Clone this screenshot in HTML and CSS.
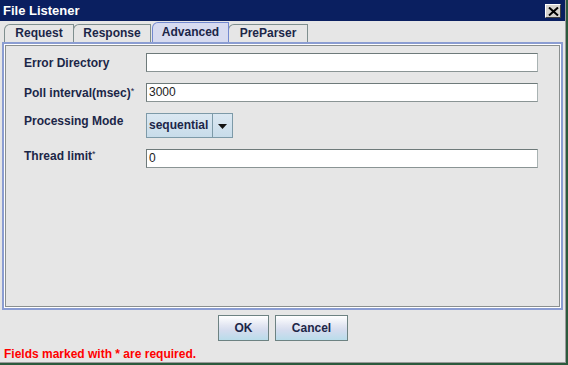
FILE: index.html
```html
<!DOCTYPE html>
<html lang="en">
<head>
  <meta charset="UTF-8">
  <title>File Listener</title>
  <link rel="stylesheet" href="styles.css">
</head>
<body>

  <div class="window">
    <div class="frame">
      <div class="titlebar">
        <span class="title">File Listener</span>
        <button class="close-btn">
          <svg width="11" height="9" viewBox="0 0 11 9"><path d="M1 0.5 L10 8.5 M10 0.5 L1 8.5" stroke="#000" stroke-width="2"/></svg>
        </button>
      </div>

      <div class="tabs">
        <div class="tab tab-request">Request</div>
        <div class="tab tab-response">Response</div>
        <div class="tab tab-advanced active-tab">Advanced</div>
        <div class="tab tab-preparser">PreParser</div>
      </div>

      <div class="panel">
        <div class="row">
          <label>Error Directory</label>
          <div class="text-field"></div>
        </div>
        <div class="row">
          <label>Poll interval(msec)<sup>*</sup></label>
          <div class="text-field">3000</div>
        </div>
        <div class="row row-combo">
          <label>Processing Mode</label>
          <div class="combo">
            <span class="combo-value">sequential</span>
            <span class="combo-arrow">
              <svg width="9" height="5" viewBox="0 0 9 5"><path d="M0 0 H9 L4.5 5 Z" fill="#111"/></svg>
            </span>
          </div>
        </div>
        <div class="row row-last">
          <label>Thread limit<sup>*</sup></label>
          <div class="text-field">0</div>
        </div>
      </div>

      <div class="buttons">
        <button class="btn btn-ok">OK</button>
        <button class="btn btn-cancel">Cancel</button>
      </div>

      <div class="note">Fields marked with * are required.</div>
    </div>
  </div>

</body>
</html>
```

FILE: styles.css
```css
body {
  margin: 0;
  font-family: "Liberation Sans", Arial, sans-serif;
  font-size: 12px;
  background-color: #e6e6e6;
}

.window {
  width: 568px;
  height: 365px;
  box-sizing: border-box;
  border-right: 2px solid #2c5a3d;
  border-bottom: 2px solid #2c5a3d;
  background-color: #e6e6e6;
}

.frame {
  height: 100%;
  box-sizing: border-box;
  border-right: 1px solid #9a9a9a;
  border-bottom: 1px solid #9a9a9a;
  display: flex;
  flex-direction: column;
}

.titlebar {
  height: 21px;
  background-color: #0a1f60;
  display: flex;
  align-items: center;
  justify-content: space-between;
  padding: 0 4px 0 3px;
}

.title {
  color: white;
  font-weight: bold;
  font-size: 13px;
}

.close-btn {
  width: 16px;
  height: 14px;
  padding: 0;
  margin-top: 1px;
  background-color: #d6d3ce;
  border: 1px solid;
  border-color: #ffffff #404040 #404040 #ffffff;
  display: flex;
  align-items: center;
  justify-content: center;
}

.tabs {
  height: 21px;
  display: flex;
  align-items: flex-end;
  padding-left: 4px;
}

.tab {
  box-sizing: border-box;
  height: 18px;
  border: 1px solid #7f8f8f;
  border-bottom: none;
  border-top-left-radius: 6px;
  background-color: #e6e6e6;
  color: #1c2648;
  font-weight: bold;
  text-align: center;
  line-height: 17px;
  margin-right: -1px;
}

.tab-request { width: 70px; }
.tab-response { width: 78px; margin-right: 1px; }
.tab-advanced { width: 77px; }
.tab-preparser { width: 80px; }

.active-tab {
  height: 20px;
  line-height: 19px;
  border: 1px solid #7389d0;
  border-bottom: none;
  background-color: #d7dbf0;
  position: relative;
  z-index: 1;
}

.panel {
  height: 268px;
  box-sizing: border-box;
  margin: 0 2px 0 2px;
  border: 2px solid #8b9dd2;
  box-shadow: inset 0 0 0 1px #ffffff, inset 0 0 0 2px #8a8f8f;
  padding: 9px 0 0 20px;
}

.row {
  display: flex;
  align-items: center;
  margin-bottom: 11px;
}

.row label {
  width: 122px;
  font-weight: bold;
  color: #1c2648;
  margin-top: 1px;
}

.row sup {
  font-size: 9px;
  vertical-align: 3px;
  font-weight: normal;
}

.text-field {
  width: 392px;
  height: 19px;
  box-sizing: border-box;
  background-color: white;
  border: 1px solid;
  border-color: #6e7a7a #a9b3b3 #8a9494 #6e7a7a;
  padding-left: 2px;
  line-height: 17px;
  color: #222;
}

.row-combo label {
  margin-top: -10px;
}

.row-last label {
  margin-top: -5px;
}

.combo {
  width: 87px;
  height: 25px;
  box-sizing: border-box;
  border: 1px solid #7d9aa8;
  background: linear-gradient(#dbe8f2, #c8dcea);
  display: flex;
}

.combo-value {
  width: 66px;
  border-right: 1px solid #7d9aa8;
  font-weight: bold;
  color: #1c2648;
  line-height: 23px;
  padding-left: 2px;
  box-sizing: border-box;
}

.combo-arrow {
  flex: 1;
  display: flex;
  align-items: center;
  justify-content: center;
  padding-top: 1px;
}

.buttons {
  display: flex;
  justify-content: center;
  gap: 6px;
  margin-top: 5px;
  padding-left: 1px;
}

.btn {
  height: 26px;
  box-sizing: border-box;
  border: 1px solid #6d8282;
  background: linear-gradient(#ffffff 0%, #e2e6f2 40%, #d4dcee 60%, #b9dcea 100%);
  font-family: "Liberation Sans", Arial, sans-serif;
  font-size: 12px;
  font-weight: bold;
  color: #1c2648;
  padding: 0;
}

.btn-ok { width: 51px; }
.btn-cancel { width: 73px; }

.note {
  color: #ff0000;
  font-weight: bold;
  padding-left: 4px;
  margin-top: 6px;
  line-height: 14px;
}
```
